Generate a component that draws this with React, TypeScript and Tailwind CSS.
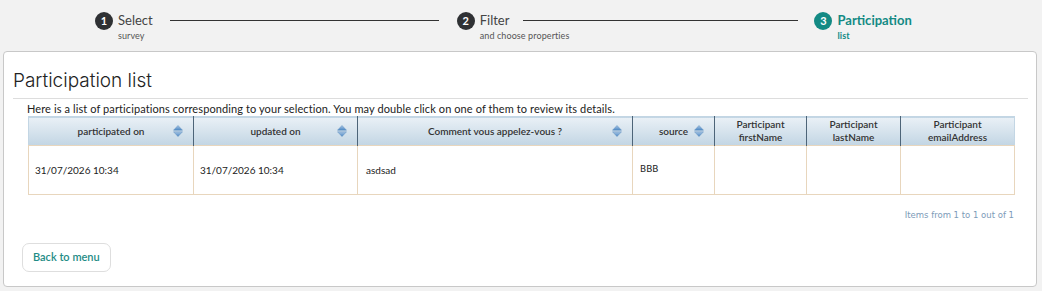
import { ReactNode } from "react"

const SortIcon = () => (
  <svg width="10" height="12" viewBox="0 0 10 12" className="shrink-0">
    <defs>
      <linearGradient id="sortg" x1="0" y1="0" x2="0" y2="1">
        <stop offset="0" stopColor="#a9c6e4" />
        <stop offset="1" stopColor="#4a86c4" />
      </linearGradient>
    </defs>
    <path d="M5 0.5 L9.5 5.2 H0.5 Z" fill="url(#sortg)" stroke="#5e8fbf" strokeWidth="0.5" />
    <path d="M0.5 6.8 H9.5 L5 11.5 Z" fill="url(#sortg)" stroke="#5e8fbf" strokeWidth="0.5" />
  </svg>
)

interface StepProps {
  num: number
  label: string
  sub: string
  active?: boolean
}

const Step = ({ num, label, sub, active }: StepProps) => (
  <div className="flex items-start gap-[5px]">
    <div
      className={`w-[18px] h-[18px] mt-[2px] rounded-full flex items-center justify-center text-white text-[11px] font-bold ${
        active ? "bg-[#138a84]" : "bg-[#2f3134]"
      }`}
    >
      {num}
    </div>
    <div className="flex flex-col">
      <span
        className={`text-[13px] leading-[20px] ${active ? "font-bold text-[#138a84]" : "text-[#444]"}`}
      >
        {label}
      </span>
      <span className={`text-[9px] leading-[11px] tracking-[0.1px] ${active ? "font-bold text-[#138a84]" : "text-[#555]"}`}>
        {sub}
      </span>
    </div>
  </div>
)

const Th = ({ children, sort, w }: { children: ReactNode; sort?: boolean; w: string }) => (
  <th className={`${w} border-r border-[#4d6478] last:border-r-0 px-2 font-semibold text-[10px] leading-[13px] text-[#333]`}>
    <div className="flex items-center justify-center relative">
      <span>{children}</span>
      {sort && (
        <div className="absolute right-[2px] top-1/2 -translate-y-1/2">
          <SortIcon />
        </div>
      )}
    </div>
  </th>
)

const App = () => {
  return (
    <div className="w-[1042px] h-[291px] bg-[#f2f2f2] font-['Lato',sans-serif] overflow-hidden">
      {/* stepper */}
      <div className="h-[51px] flex items-start pt-[10px] pl-[95px]">
        <Step num={1} label="Select" sub="survey" />
        <div className="w-[269px] h-px bg-[#333] mt-[10px] ml-[17px] mr-[18px]" />
        <Step num={2} label="Filter" sub="and choose properties" />
        <div className="w-[275px] h-px bg-[#333] mt-[10px] ml-[-46px] mr-[16px]" />
        <Step num={3} label="Participation" sub="list" active />
      </div>

      {/* card */}
      <div className="mx-[3px] mr-[5px] h-[236px] bg-white border border-[#c8c8c8] rounded-[4px] px-[8px] pt-[16px]">
        <h1 className="font-['Inter',sans-serif] font-light text-[19px] leading-[26px] text-[#222] ml-[1px] pb-[4px] border-b border-[#dddddd]">
          Participation list
        </h1>
        <p className="text-[11px] leading-[14px] tracking-[0.1px] text-[#222] mt-[3px] ml-[15px]">
          Here is a list of participations corresponding to your selection. You may double click on one of them to
          review its details.
        </p>
        <table className="ml-[16px] w-[986px] border-collapse table-fixed">
          <thead>
            <tr className="h-[29px] bg-gradient-to-b from-[#e9f0f6] to-[#c3d6e4] border border-[#c3d6e4] border-b-[#4d6478] border-b-[1.5px]">
              <Th w="w-[165px]" sort>participated on</Th>
              <Th w="w-[164px]" sort>updated on</Th>
              <Th w="w-[275px]" sort>Comment vous appelez-vous ?</Th>
              <Th w="w-[82px]" sort>source</Th>
              <Th w="w-[92px]">Participant<br />firstName</Th>
              <Th w="w-[94px]">Participant<br />lastName</Th>
              <Th w="w-[114px]">Participant<br />emailAddress</Th>
            </tr>
          </thead>
          <tbody>
            <tr className="h-[49px] text-[10px] text-[#222]">
              <td className="border border-[#e8d6bd] px-[6px]">31/07/2026 10:34</td>
              <td className="border border-[#e8d6bd] px-[6px]">31/07/2026 10:34</td>
              <td className="border border-[#e8d6bd] px-[8px]">asdsad</td>
              <td className="border border-[#e8d6bd] px-[7px] font-['DejaVu_Sans',sans-serif] text-[9px]">BBB</td>
              <td className="border border-[#e8d6bd]" />
              <td className="border border-[#e8d6bd]" />
              <td className="border border-[#e8d6bd]" />
            </tr>
          </tbody>
        </table>
        <div className="w-[1002px] text-right mt-[15px] text-[8.5px] leading-[11px] text-[#7c9bb8] font-['DejaVu_Sans',sans-serif]">
          Items from 1 to 1 out of 1
        </div>
        <button className="mt-[22px] ml-[10px] h-[29px] px-[10px] rounded-[7px] border border-[#dedede] bg-white text-[11px] font-semibold text-[#1f8c86]">
          Back to menu
        </button>
      </div>
    </div>
  )
}

export default App
